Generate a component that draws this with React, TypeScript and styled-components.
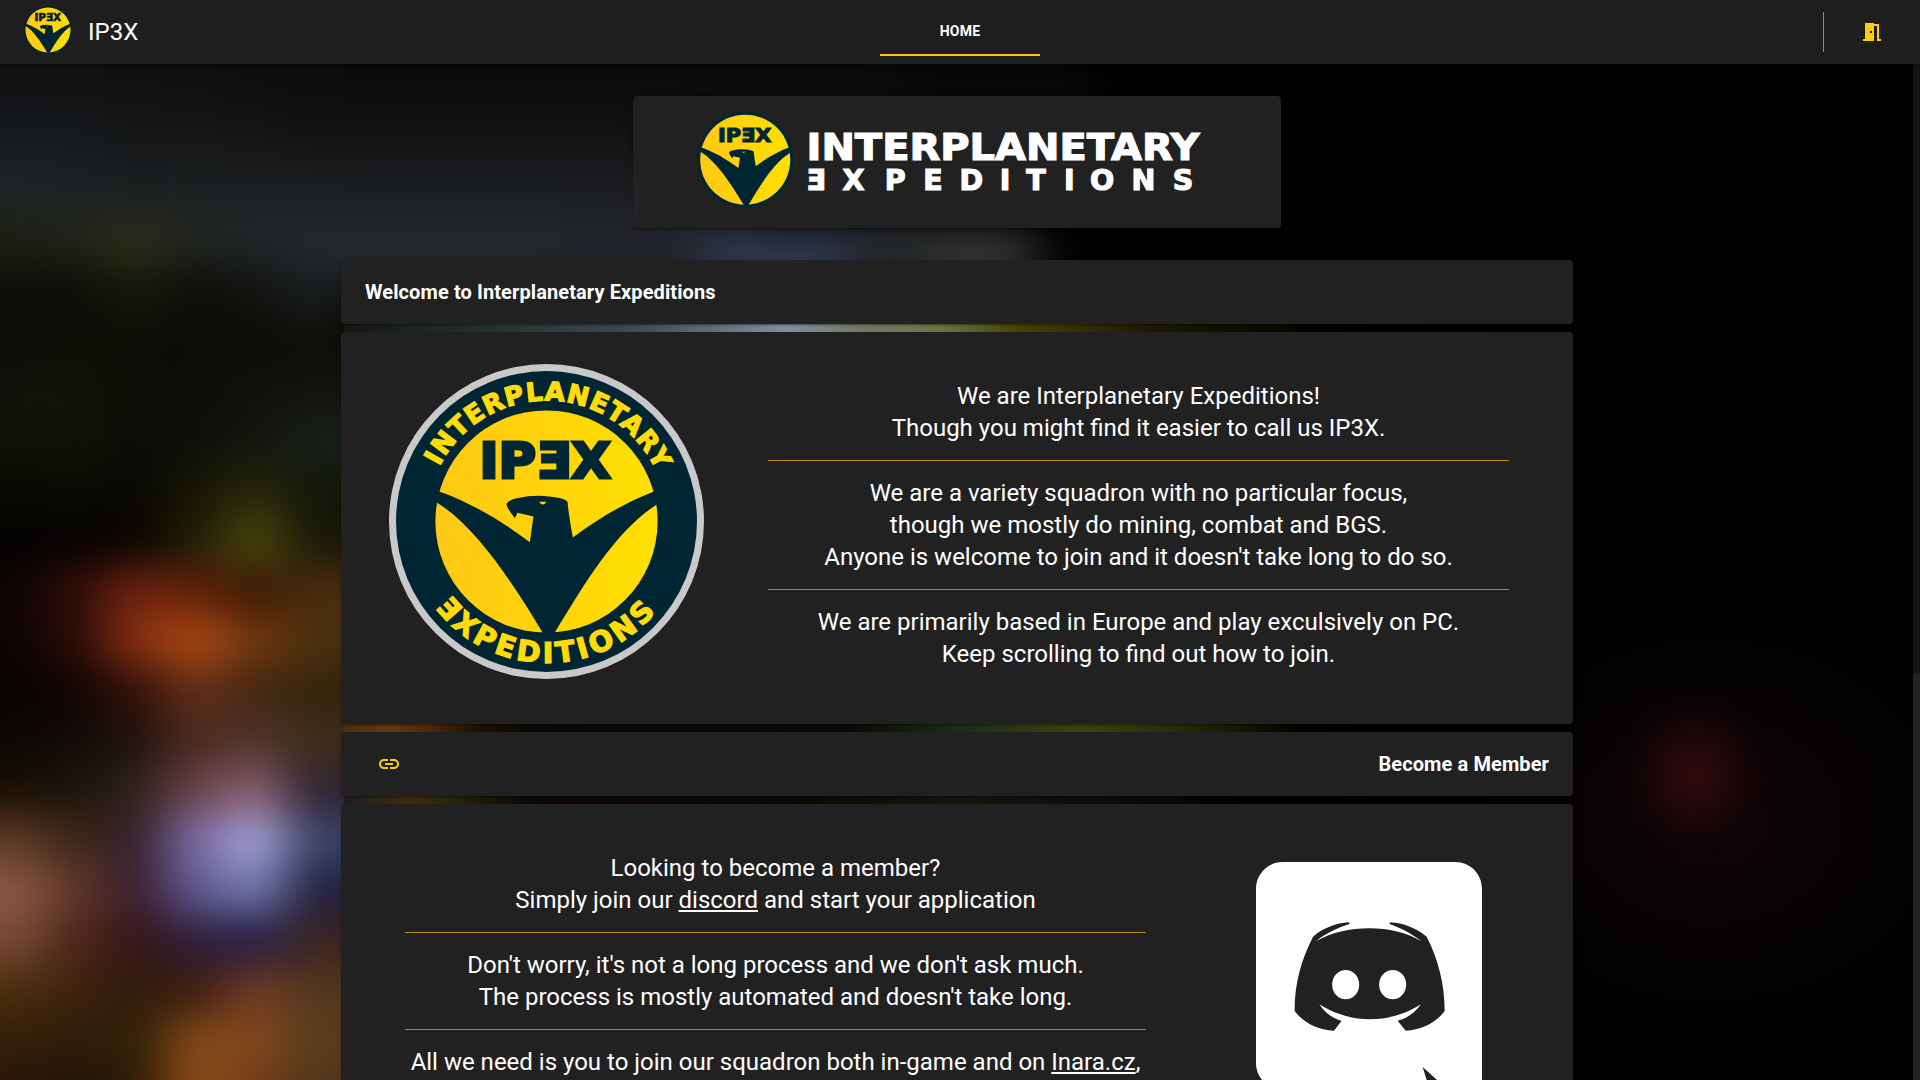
import React from "react";
import styled, { createGlobalStyle } from "styled-components";

const Global = createGlobalStyle`
  html, body { margin: 0; background: #000; overflow: hidden; height: 1080px; }
  * { box-sizing: border-box; }
  body { font-family: Roboto, "Liberation Sans", sans-serif; color: #fff; }
`;

const Page = styled.div`
  position: relative;
  width: 1920px;
  height: 1080px;
  overflow: hidden;
  display: flex;
  flex-direction: column;
`;

const Backdrop = styled.svg`
  position: absolute;
  inset: 0;
`;

const Header = styled.header`
  position: relative;
  z-index: 1;
  flex: none;
  height: 64px;
  display: grid;
  grid-template-columns: 1fr 160px 1fr;
  align-items: center;
  background: #1e1e1e;
  box-shadow: 0 2px 4px -1px rgba(0, 0, 0, 0.2), 0 4px 5px rgba(0, 0, 0, 0.14), 0 1px 10px rgba(0, 0, 0, 0.12);
`;

const Brand = styled.div`
  display: flex;
  align-items: center;
  gap: 16px;
  padding-left: 24px;
  font-size: 24px;
  line-height: 32px;
  svg { margin-top: -4px; }
`;

const Tab = styled.a`
  align-self: start;
  height: 56px;
  padding-top: 8px;
  display: flex;
  align-items: center;
  justify-content: center;
  border-bottom: 2px solid #ffcc00;
  font-size: 14px;
  font-weight: 700;
  letter-spacing: 0.25px;
`;

const Actions = styled.div`
  display: flex;
  justify-content: flex-end;
  align-items: center;
  gap: 36px;
  padding-right: 36px;
`;

const Rule = styled.span`
  width: 1px;
  height: 40px;
  background: #b18c17;
`;

const Body = styled.div`
  position: relative;
  flex: 1;
  min-height: 0;
  display: flex;
`;

const Main = styled.main`
  flex: 1;
  display: flex;
  flex-direction: column;
  align-items: center;
  padding: 32px 0 0 1px;
  overflow: hidden;
`;

const Scrollbar = styled.div`
  width: 7px;
  background: #222;
`;

const Thumb = styled.div`
  height: 610px;
  background: #151515;
`;

const Card = styled.section`
  flex: none;
  width: 1232px;
  background: #212121;
  border-radius: 4px;
  box-shadow: 0 3px 1px -2px rgba(0, 0, 0, 0.2), 0 2px 2px rgba(0, 0, 0, 0.14), 0 1px 5px rgba(0, 0, 0, 0.12);
`;

const Banner = styled(Card)`
  width: 648px;
  height: 132px;
  margin-bottom: 32px;
`;

const TitleCard = styled(Card)`
  height: 64px;
  margin-bottom: 8px;
  padding: 0 24px;
  display: flex;
  align-items: center;
  justify-content: space-between;
  font-size: 20px;
  font-weight: 700;
  letter-spacing: 0.1px;
  line-height: 32px;
  svg { margin-left: 12px; }
`;

const Content = styled(Card)<{ $reverse?: boolean }>`
  height: 392px;
  margin-bottom: 8px;
  padding: ${(p) => (p.$reverse ? "48px 91px 0 64px" : "32px 64px 0 48px")};
  display: flex;
  align-items: flex-start;
  justify-content: space-between;
`;

const Copy = styled.div<{ $top?: number }>`
  width: 741px;
  padding-top: ${(p) => p.$top ?? 0}px;
  text-align: center;
  font-size: 24px;
  line-height: 32px;
`;

const Divider = styled.hr`
  height: 1px;
  margin: 16px 0;
  border: 0;
  background: #b18c0b;
`;

const Para = styled.p`
  margin: 0;
  white-space: nowrap;
`;

const Link = styled.a`
  color: #fff;
  text-decoration: underline;
`;

const DiscordMark = styled.svg`
  margin-top: 10px;
`;

const DARK = "#002633";
const LOGO_FONT = '"DejaVu Sans", sans-serif';

const Emblem = ({ id }: { id: string }) => (
  <g>
    <defs>
      <linearGradient id={id} x1="0" x2="1" y1="0" y2="0">
        <stop offset="0" stopColor="#ffc815" />
        <stop offset="1" stopColor="#ffe000" />
      </linearGradient>
    </defs>
    <circle cx="530" cy="514" r="333" fill={`url(#${id})`} />
    <path
      fill={DARK}
      d="M206 423C300 455 400 515 480 576L491 499L443 488L435 504C425 490 412 475 410 462C414 448 455 438 505 437C550 438 588 446 593 455C596 490 603 530 609 562C680 508 770 455 852 424L862 462C740 540 650 690 553 850L520 850C430 700 320 530 200 456Z"
    />
    <path d="M508 455h22q-5 8-11 8q-6 0-11-8z" fill="#ffd20c" />
    <text x="329" y="384" fontFamily={LOGO_FONT} fontWeight="700" fontSize="147" textLength="394" lengthAdjust="spacingAndGlyphs" fill={DARK} stroke={DARK} strokeWidth="9">
      IPƎX
    </text>
  </g>
);

const RoundLogo = ({ id, size }: { id: string; size: number }) => (
  <svg width={size} height={size} viewBox="175 159 710 710">
    <circle cx="530" cy="514" r="355" fill={DARK} />
    <Emblem id={id} />
  </svg>
);

const Badge = () => (
  <svg width="315" height="315" viewBox="58 42 944 944">
    <circle cx="530" cy="514" r="472" fill="#c9c9c9" />
    <circle cx="530" cy="514" r="451" fill={DARK} />
    <Emblem id="badge" />
    <path id="arcTop" d="M208.6 349A361 361 0 0 1 862 370" fill="none" />
    <path id="arcBottom" d="M197 773A423 423 0 0 0 860 782" fill="none" />
    <g fontFamily={LOGO_FONT} fontWeight="700" fill="#ffdb08" stroke="#ffdb08" strokeWidth="4">
      <text fontSize="78">
        <textPath href="#arcTop" textLength="808">INTERPLANETARY</textPath>
      </text>
      <text fontSize="86">
        <textPath href="#arcBottom" textLength="758">ƎXPEDITIONS</textPath>
      </text>
    </g>
  </svg>
);

const Wordmark = () => (
  <svg width="648" height="132" viewBox="633 96 648 132">
    <svg x="697.200" y="111.700" width="96" height="96" viewBox="175 159 710 710">
      <circle cx="530" cy="514" r="355" fill={DARK} />
      <Emblem id="banner" />
    </svg>
    <g fontFamily={LOGO_FONT} fontWeight="700" fill="#fff" stroke="#fff" strokeWidth="1.2">
      <text x="806.500" y="160" fontSize="38" textLength="393" lengthAdjust="spacingAndGlyphs">INTERPLANETARY</text>
      <text y="190.300" fontSize="28.500" textAnchor="middle" x="816 853.5 895.2 933 971.3 1005 1036.1 1069.4 1102.2 1143.5 1183">ƎXPEDITIONS</text>
    </g>
  </svg>
);

const CELL_W = 60;
const CELL_H = 50;
const mesh: string[] = [
  "101113 101112 101011 0f0f0f 0e0e0e 0d0d0d",
  "111214 111213 111112 101010 0e0e0e 0d0d0d",
  "171b1f 171b1e 161819 161718 161617 131313",
  "1d2326 1c2123 1b1f21 1c2022 1c2022 1c1f21",
  "1e2013 21241a 2c2e1b 212520 1f262a 22282c",
  "0c0c06 0c0d07 171809 0d0e08 11130f 1b2022",
  "0c0d08 0c0d06 0c0d06 0b0c07 0c0d07 0d0e08",
  "10110a 131406 0a0c06 0d0e0a 10110b 12130b",
  "101107 111205 0b0c07 0e0f0a 13140d 18211b",
  "090903 0a0a03 090804 151505 26270a 141609",
  "030202 040202 080302 201d05 4a490b 17170a",
  "0d0504 300c09 6e230f 5e1f08 3a1805 4a2c0c",
  "0c0403 280a08 8a3012 b04a12 73380f 4a300d",
  "080302 100403 30100a 642e14 422511 33240a",
  "0c0804 120b07 20120e 4a2820 50332a 3e2c18",
  "170e04 1c140b 2e211b 6c444a 8a5f70 2d2230",
  "603a26 3e2618 33202c 7a6ca8 a8a8dc 3c4468",
  "8c5a44 63382a 3a1c2c 5f5a90 7478b0 20203f",
  "784a34 4c2618 381518 2c1c3a 201c42 3a2320",
  "4a2e0c 40200f 301c0a 3c1c0f 703c26 54371c",
  "351d08 2e1d08 302006 844a18 84481c 5a3d1c",
  "2a1508 201408 2a1a06 904c1a 703a18 50351a",
  "2a1508 201408 2a1a06 904c1a 703a18 50351a",
];

const glow: [number, number, number, number, string][] = [
  [345, 0, 555, 115, "#0d0c0c"],
  [900, 0, 200, 140, "#080606"],
  [345, 115, 315, 50, "#141415"],
  [345, 165, 415, 50, "#1b1e21"],
  [345, 215, 215, 70, "#23282c"],
  [560, 215, 140, 70, "#22242b"],
  [700, 225, 150, 90, "#2f374b"],
  [850, 215, 70, 70, "#23262a"],
  [920, 225, 115, 90, "#2f332e"],
];

const strips: [number, [number, string][]][] = [
  [322, [[341, "#151a12"], [480, "#27302f"], [640, "#454d55"], [785, "#8790a2"], [860, "#747b68"], [940, "#6d7843"], [1020, "#454604"], [1150, "#1d1b03"], [1320, "#040402"], [1573, "#010101"]]],
  [722, [[341, "#4a300f"], [390, "#643a0c"], [430, "#4f2a08"], [480, "#1c1206"], [540, "#0a0906"], [850, "#0c0c08"], [960, "#1d2e1a"], [1080, "#40440c"], [1170, "#2c2f08"], [1300, "#040402"], [1573, "#060102"]]],
  [794, [[341, "#241828"], [410, "#3a320a"], [450, "#2c260a"], [520, "#120c06"], [560, "#120705"], [800, "#0c0c05"], [960, "#15180c"], [1120, "#0d0d0d"], [1250, "#030303"], [1573, "#080203"]]],
];

const App = () => (
  <Page>
    <Global />
    <Backdrop width="1920" height="1080">
      <defs>
        <filter id="soft" filterUnits="userSpaceOnUse" x="-200" y="-100" width="1600" height="1350" colorInterpolationFilters="sRGB">
          <feGaussianBlur stdDeviation="25 20" />
        </filter>
        <radialGradient id="ember">
          <stop offset="0" stopColor="#30090d" />
          <stop offset="0.35" stopColor="#26080b" stopOpacity="0.85" />
          <stop offset="0.7" stopColor="#180506" stopOpacity="0.45" />
          <stop offset="1" stopColor="#100304" stopOpacity="0" />
        </radialGradient>
        <radialGradient id="haze">
          <stop offset="0" stopColor="#0f0407" />
          <stop offset="1" stopColor="#0f0407" stopOpacity="0" />
        </radialGradient>
        {strips.map(([y, stops]) => (
          <linearGradient key={y} id={`strip${y}`} gradientUnits="userSpaceOnUse" x1="341" x2="1573" y1="0" y2="0">
            {stops.map(([x, c]) => (
              <stop key={x} offset={(x - 341) / 1232} stopColor={c} />
            ))}
          </linearGradient>
        ))}
      </defs>
      <rect width="1920" height="1080" fill="#010102" />
      <g filter="url(#soft)">
        {mesh.map((row, r) =>
          row.split(" ").map((c, i) => {
            const bleed = i === 0 ? 120 : 0;
            return (
              <rect key={`${r}-${i}`} x={i * CELL_W - 15 - bleed} y={15 + r * CELL_H} width={CELL_W + bleed + 1} height={CELL_H + 1} fill={`#${c}`} />
            );
          })
        )}
        {mesh.map((row, r) =>
          r > 5 ? <rect key={r} x="345" y={15 + r * CELL_H} width="105" height={CELL_H + 1} fill={`#${row.split(" ")[5]}`} /> : null
        )}
        {glow.map(([x, y, w, h, c]) => (
          <rect key={`${x}-${y}`} x={x} y={y} width={w + 1} height={h + 1} fill={c} />
        ))}
      </g>
      <ellipse cx="1710" cy="820" rx="240" ry="190" fill="url(#haze)" />
      <ellipse cx="1695" cy="775" rx="85" ry="90" fill="url(#ember)" />
      {strips.map(([y]) => (
        <rect key={y} x="344" y={y} width="1226" height="12" fill={`url(#strip${y})`} />
      ))}
    </Backdrop>
    <Header>
      <Brand>
        <RoundLogo id="head" size={48} />
        IP3X
      </Brand>
      <Tab>HOME</Tab>
      <Actions>
        <Rule />
        <svg width="24" height="24" viewBox="0 0 24 24" fill="#ffcc11">
          <path d="M14 6v15H3v-2h2V3h9v1h5v15h2v2h-4V6h-3zm-4 5v2h2v-2h-2z" />
        </svg>
      </Actions>
    </Header>
    <Body>
      <Main>
        <Banner><Wordmark /></Banner>
        <TitleCard>Welcome to Interplanetary Expeditions</TitleCard>
        <Content>
          <Badge />
          <Copy $top={16}>
            <Para>We are Interplanetary Expeditions!<br />Though you might find it easier to call us IP3X.</Para>
            <Divider />
            <Para>We are a variety squadron with no particular focus,<br />though we mostly do mining, combat and BGS.<br />Anyone is welcome to join and it doesn't take long to do so.</Para>
            <Divider />
            <Para>We are primarily based in Europe and play exculsively on PC.<br />Keep scrolling to find out how to join.</Para>
          </Copy>
        </Content>
        <TitleCard>
          <svg width="24" height="24" viewBox="0 0 24 24" fill="#ffcc11">
            <path d="M3.9 12c0-1.71 1.39-3.1 3.1-3.1h4V7H7c-2.76 0-5 2.24-5 5s2.24 5 5 5h4v-1.9H7c-1.71 0-3.1-1.39-3.1-3.1zM8 13h8v-2H8v2zm9-6h-4v1.9h4c1.71 0 3.1 1.39 3.1 3.1s-1.39 3.1-3.1 3.1h-4V17h4c2.76 0 5-2.24 5-5s-2.24-5-5-5z" />
          </svg>
          Become a Member
        </TitleCard>
        <Content $reverse>
          <Copy>
            <Para>Looking to become a member?<br />Simply join our <Link>discord</Link> and start your application</Para>
            <Divider />
            <Para>Don't worry, it's not a long process and we don't ask much.<br />The process is mostly automated and doesn't take long.</Para>
            <Divider />
            <Para>All we need is you to join our squadron both in-game and on <Link>Inara.cz</Link>,</Para>
          </Copy>
          <DiscordMark width="226" height="258" viewBox="77 65 678 774">
            <path fill="#fff" d="M157 65H675C719 65 755 101 755 145V839L671 765L577 680L598 748H157C113 748 77 712 77 668V145C77 101 113 65 157 65Z" />
            <path fill="#212121" d="M248 289C278 263 318 248 356 246L358 251C322 262 287 278 257 303C345 252 486 250 573 303C542 278 511 263 477 251L480 246C519 248 557 263 589 289C624 357 643 432 643 512C617 547 576 568 526 571L502 541C532 534 556 515 572 492C480 551 360 552 267 492C281 514 306 535 334 541L311 571C260 568 219 547 193 512C192 432 213 357 248 289Z" />
            <ellipse cx="346" cy="433" rx="40.500" ry="44" fill="#fff" />
            <ellipse cx="487" cy="433" rx="40.500" ry="44" fill="#fff" />
          </DiscordMark>
        </Content>
      </Main>
      <Scrollbar><Thumb /></Scrollbar>
    </Body>
  </Page>
);

export default App;
